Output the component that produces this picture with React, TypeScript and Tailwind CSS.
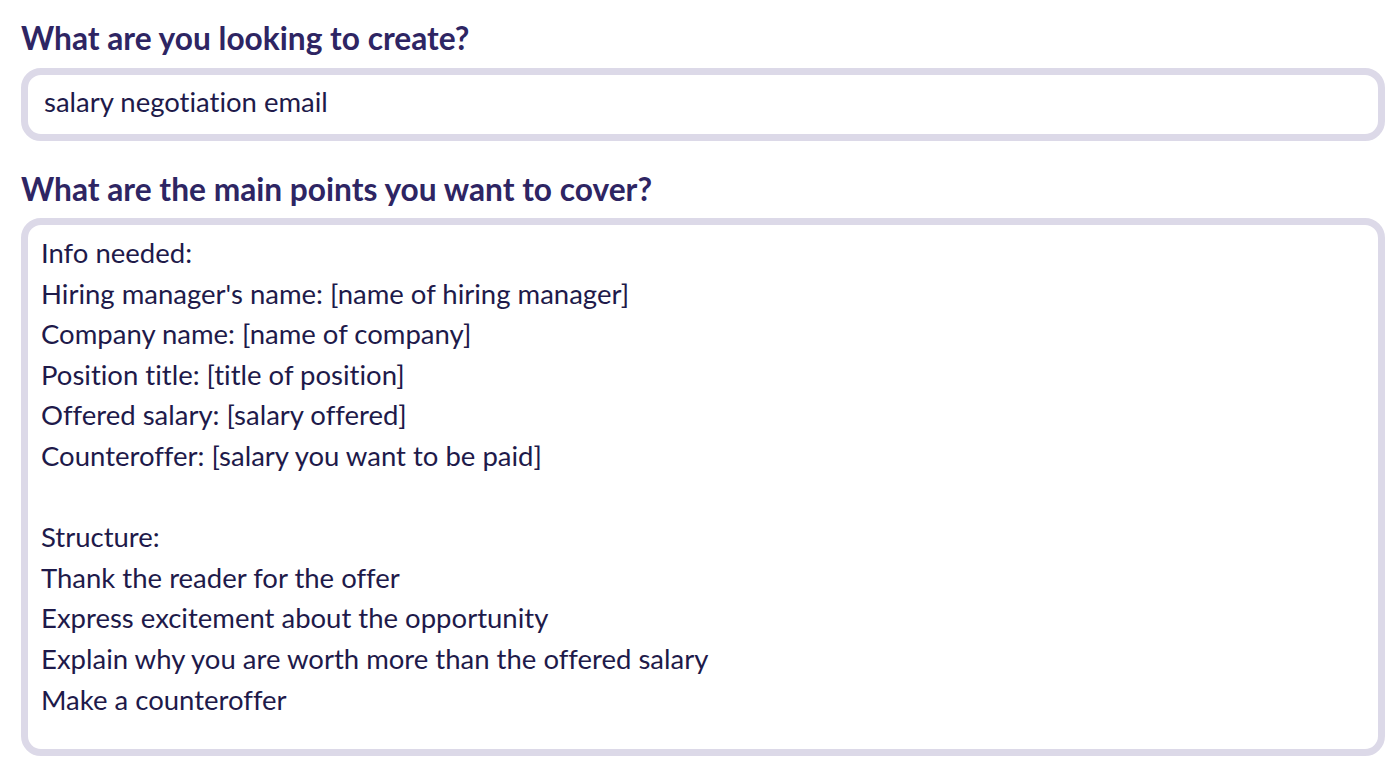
import React from 'react';

const FONT = { fontFamily: '"Lato", "Noto Sans", sans-serif' };

const points = [
  'Info needed:',
  "Hiring manager's name: [name of hiring manager]",
  'Company name: [name of company]',
  'Position title: [title of position]',
  'Offered salary: [salary offered]',
  'Counteroffer: [salary you want to be paid]',
  '',
  'Structure:',
  'Thank the reader for the offer',
  'Express excitement about the opportunity',
  'Explain why you are worth more than the offered salary',
  'Make a counteroffer',
];

const App: React.FC = () => {
  return (
    <div
      className="min-h-screen bg-white pl-[21px] pr-[15px] pt-[20px] [font-variant-ligatures:none]"
      style={FONT}
    >
      {/* Prompt */}
      <h2 className="text-[31.7px] leading-[36px] font-bold text-[#2e2563]">
        What are you looking to create?
      </h2>
      <div className="mt-[12px] h-[73px] rounded-[20px] border-[7px] border-[#dcd9e8] bg-white flex items-center px-[16px] pb-[5px]">
        <span className="text-[27.5px] text-[#1e1a4a]">salary negotiation email</span>
      </div>

      {/* Main points */}
      <h2 className="mt-[30px] text-[31.7px] leading-[36px] font-bold text-[#2e2563]">
        What are the main points you want to cover?
      </h2>
      <div className="mt-[11px] h-[538px] rounded-[20px] border-[7px] border-[#dcd9e8] bg-white px-[13px] pt-[8px]">
        {points.map((line, idx) => (
          <div key={idx} className="text-[27.5px] leading-[40.6px] h-[40.6px] text-[#1e1a4a]">
            {line}
          </div>
        ))}
      </div>
    </div>
  );
};

export default App;
